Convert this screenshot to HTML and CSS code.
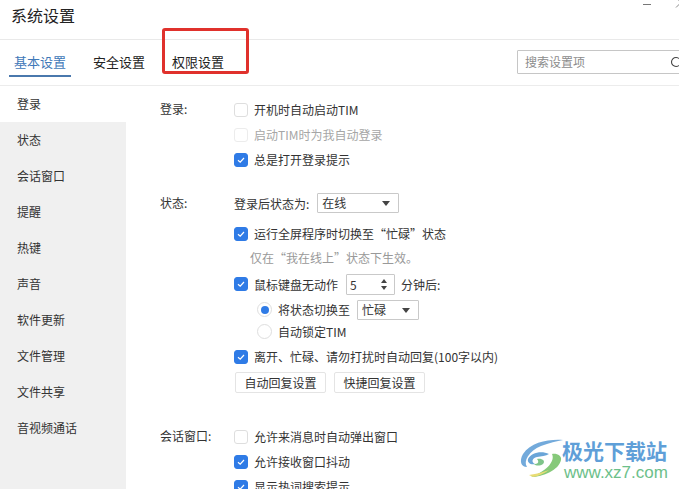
FILE: index.html
```html
<!DOCTYPE html>
<html lang="zh-CN">
<head>
<meta charset="utf-8">
<title>系统设置</title>
<link rel="stylesheet" href="styles.css">
</head>
<body>
<div class="window">
  <header class="titlebar">
    <h1 class="title">系统设置</h1>
    <div class="controls">
      <span class="min"></span>
      <svg class="close" width="12" height="12" viewBox="0 0 12 12"><path d="M1 0.5L6 5.5L1 10.5" fill="none" stroke="#8a8a8a" stroke-width="1"/></svg>
    </div>
  </header>
  <nav class="tabs">
    <a class="tab active">基本设置</a>
    <a class="tab">安全设置</a>
    <a class="tab">权限设置</a>
    <div class="search">
      <span class="search-text">搜索设置项</span>
      <svg class="search-icon" width="12" height="12" viewBox="0 0 12 12"><circle cx="6" cy="6" r="4.5" fill="none" stroke="#444" stroke-width="1.1"/></svg>
    </div>
  </nav>
  <div class="body">
    <aside class="side">
      <div class="side-item current">登录</div>
      <div class="side-item">状态</div>
      <div class="side-item">会话窗口</div>
      <div class="side-item">提醒</div>
      <div class="side-item">热键</div>
      <div class="side-item">声音</div>
      <div class="side-item">软件更新</div>
      <div class="side-item">文件管理</div>
      <div class="side-item">文件共享</div>
      <div class="side-item">音视频通话</div>
    </aside>
    <main class="main">
      <section class="group g-login">
        <div class="label">登录:</div>
        <div class="opts">
          <div class="row"><span class="cb"></span>开机时自动启动TIM</div>
          <div class="row muted"><span class="cb dim"></span>启动TIM时为我自动登录</div>
          <div class="row"><span class="cb on"><svg width="10" height="10" viewBox="0 0 10 10"><path d="M2 5.2L4.2 7.2L8 3" fill="none" stroke="#fff" stroke-width="1.2"/></svg></span>总是打开登录提示</div>
        </div>
      </section>
      <section class="group g-status">
        <div class="label">状态:</div>
        <div class="opts">
          <div class="row r-select">登录后状态为:<span class="select s-online">在线<i class="arrow"></i></span></div>
          <div class="row r-full"><span class="cb on"><svg width="10" height="10" viewBox="0 0 10 10"><path d="M2 5.2L4.2 7.2L8 3" fill="none" stroke="#fff" stroke-width="1.2"/></svg></span>运行全屏程序时切换至“忙碌”状态</div>
          <div class="hint">仅在“我在线上”状态下生效。</div>
          <div class="row r-idle"><span class="cb on"><svg width="10" height="10" viewBox="0 0 10 10"><path d="M2 5.2L4.2 7.2L8 3" fill="none" stroke="#fff" stroke-width="1.2"/></svg></span>鼠标键盘无动作<span class="spin">5<span class="spin-arrows"><i class="up"></i><i class="down"></i></span></span>分钟后:</div>
          <div class="row r-radio"><span class="radio on"></span>将状态切换至<span class="select s-busy">忙碌<i class="arrow"></i></span></div>
          <div class="row r-radio2"><span class="radio"></span>自动锁定TIM</div>
          <div class="row r-reply"><span class="cb on"><svg width="10" height="10" viewBox="0 0 10 10"><path d="M2 5.2L4.2 7.2L8 3" fill="none" stroke="#fff" stroke-width="1.2"/></svg></span>离开、忙碌、请勿打扰时自动回复(100字以内)</div>
          <div class="buttons"><button class="btn">自动回复设置</button><button class="btn">快捷回复设置</button></div>
        </div>
      </section>
      <section class="group g-chat">
        <div class="label">会话窗口:</div>
        <div class="opts">
          <div class="row"><span class="cb"></span>允许来消息时自动弹出窗口</div>
          <div class="row"><span class="cb on"><svg width="10" height="10" viewBox="0 0 10 10"><path d="M2 5.2L4.2 7.2L8 3" fill="none" stroke="#fff" stroke-width="1.2"/></svg></span>允许接收窗口抖动</div>
          <div class="row"><span class="cb on"><svg width="10" height="10" viewBox="0 0 10 10"><path d="M2 5.2L4.2 7.2L8 3" fill="none" stroke="#fff" stroke-width="1.2"/></svg></span>显示热词搜索提示</div>
        </div>
      </section>
    </main>
  </div>
  <div class="highlight"></div>
  <div class="watermark">
    <svg class="wm-logo" width="46" height="40" viewBox="0 0 46 40">
      <path d="M44 1C30 0 12 3 4 15C0 22 2 28 8 28C4 22 10 12 22 7C30 4 38 2 44 1Z" fill="#5b9bd5" opacity="0.85"/>
      <path d="M30 15C22 11 12 14 9 20C8 24 12 26 16 25C12 23 13 19 18 18C22 17 27 17 30 15Z" fill="#6aa5d8"/>
      <path d="M33 15C36 21 30 31 12 38C24 38 40 31 42 21C43 17 38 14 33 15Z" fill="#86c97a"/>
      <path d="M14 38C20 37 26 34 30 31C24 33 18 35 10 36Z" fill="#e9dc74"/>
      <path d="M18 20C23 19 27 22 24 25C21 27 17 27 15 25C18 25 21 24 18 20Z" fill="#7fc48a"/>
    </svg>
    <div class="wm-text">
      <div class="wm-cn">极光下载站</div>
      <div class="wm-url">www.xz7.com</div>
    </div>
  </div>
</div>
</body>
</html>
```
FILE: styles.css
```css
* { box-sizing: border-box; }
html, body { margin: 0; padding: 0; height: 100%; overflow: hidden; background: #fff; }
body { font-family: "Noto Sans CJK SC", "Liberation Sans", sans-serif; font-size: 12px; color: #333; }
.window { position: relative; width: 679px; height: 489px; overflow: hidden; display: flex; flex-direction: column; }

.titlebar { height: 40px; flex: none; display: flex; justify-content: space-between; border-bottom: 1px solid #e9e9e9; padding-left: 11px; }
.title { margin: 3px 0 0; font-size: 16px; font-weight: 400; line-height: 24px; color: #222; }
.controls { display: flex; align-items: flex-start; width: 36px; gap: 24px; }
.min { width: 8px; height: 1px; background: #777; margin-top: 4px; flex: none; }
.close { margin-top: -3px; flex: none; }

.tabs { height: 46px; flex: none; display: flex; align-items: flex-start; border-bottom: 1px solid #ececec; padding-left: 9px; }
.tab { width: 79px; height: 37px; padding: 12px 0 0 5px; font-size: 13px; line-height: 20px; color: #222; flex: none; }
.tab.active { width: 62px; margin-right: 17px; color: #3f78b8; border-bottom: 2px solid #4a78ad; }
.search { margin-left: auto; margin-right: -6px; margin-top: 10px; width: 168px; height: 24px; border: 1px solid #c6c6c6; border-radius: 1px; display: flex; align-items: center; justify-content: space-between; padding: 0 2px 0 7px; }
.search-text { color: #8c8c8c; font-size: 12px; line-height: 20px; }
.search-icon { flex: none; }

.body { flex: 1; display: flex; min-height: 0; }
.side { width: 126px; flex: none; background: #f0f0f0; }
.side-item { height: 36px; padding: 9px 0 0 17px; line-height: 18px; color: #333; }
.side-item.current { background: #fff; }

.main { flex: 1; padding: 14px 0 0 34px; min-width: 0; }
.group { display: flex; }
.label { width: 74px; flex: none; line-height: 18px; color: #333; }
.opts { flex: 1; display: flex; flex-direction: column; }
.row { display: flex; align-items: center; height: 25px; white-space: nowrap; margin-top: -3px; color: #333; }
.row.muted { color: #a6a6a6; }
.g-login .row { margin-top: 0; }
.g-login .opts, .g-chat .opts { margin-top: -3px; }
.g-status { margin-top: 22px; }
.g-chat { margin-top: 34px; }
.g-chat .row { margin-top: 0; }

.cb { width: 14px; height: 14px; flex: none; margin-right: 6px; border: 1px solid #dedede; border-radius: 3px; background: #fff; display: flex; align-items: center; justify-content: center; }
.cb.dim { border-color: #ececec; }
.cb.on { background: #2f7be6; border-color: #2f7be6; }

.r-select { height: 24px; margin-top: -3px; }
.r-full { margin-top: 6px; height: 25px; }
.hint { height: 24px; line-height: 24px; padding-left: 16px; color: #999; margin-top: 0; }
.r-idle { margin-top: 1px; height: 26px; }
.r-radio { margin-top: 0; height: 25px; padding-left: 23px; }
.r-radio2 { margin-top: -3px; height: 25px; padding-left: 23px; }
.r-reply { margin-top: 0; height: 25px; }

.select { position: relative; display: block; height: 20px; margin-left: 8px; border: 1px solid #c9c9c9; border-radius: 1px; padding-left: 4px; line-height: 18px; color: #333; background: #fff; }
.s-online { width: 82px; }
.s-busy { width: 62px; margin-left: 7px; }
.arrow { position: absolute; right: 8px; top: 7px; border-left: 4px solid transparent; border-right: 4px solid transparent; border-top: 5px solid #444; }

.spin { position: relative; display: block; width: 49px; height: 21px; margin: 0 6px 0 8px; border: 1px solid #c9c9c9; border-radius: 1px; padding-left: 3px; line-height: 19px; color: #333; background: #fff; }
.spin-arrows { position: absolute; right: 7px; top: 4px; display: flex; flex-direction: column; gap: 3px; }
.up { display: block; border-left: 3.5px solid transparent; border-right: 3.5px solid transparent; border-bottom: 4px solid #444; }
.down { display: block; border-left: 3.5px solid transparent; border-right: 3.5px solid transparent; border-top: 4px solid #444; }

.radio { width: 15px; height: 15px; flex: none; margin-right: 6px; border: 1px solid #dedede; border-radius: 50%; background: #fff; position: relative; }
.radio.on::after { content: ""; position: absolute; left: 2.5px; top: 2.5px; width: 8px; height: 8px; border-radius: 50%; background: #2f7be6; }

.buttons { display: flex; gap: 8px; margin-top: 3px; padding-left: 1px; }
.btn { width: 91px; height: 21px; padding: 0; border: 1px solid #e4e4e4; border-radius: 2px; background: #fff; font: inherit; line-height: 18px; color: #333; }

.highlight { position: absolute; left: 162px; top: 28px; width: 87px; height: 46px; border: 3px solid #e0312c; border-radius: 3px; }

.watermark { position: absolute; left: 519px; top: 439px; display: flex; align-items: flex-start; }
.wm-logo { flex: none; }
.wm-text { margin-left: -3px; }
.wm-cn { font-size: 21px; line-height: 22px; font-weight: 700; color: #5f9fd8; white-space: nowrap; }
.wm-url { font-family: "Liberation Sans", sans-serif; font-size: 17px; line-height: 20px; color: #6cc08a; white-space: nowrap; margin-left: 2px; margin-top: 2px; }
```
